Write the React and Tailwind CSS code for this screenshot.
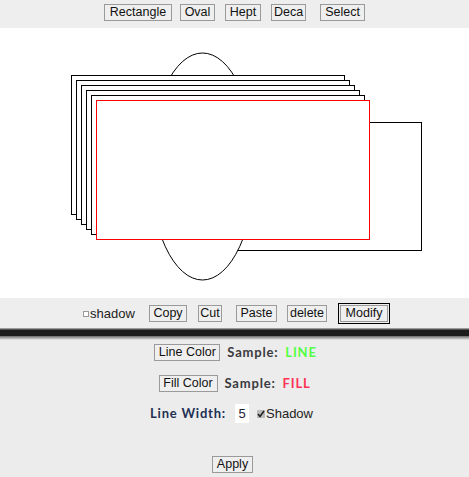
import React from 'react';

const font = { fontFamily: '"Liberation Sans", Arial, sans-serif' };

const Btn = ({ children, className = '' }) => (
    <button
        className={`h-[17px] px-0 border border-[#9a9a9a] bg-[#efefef] text-[12.5px] leading-none text-[#111] shrink-0 ${className}`}
        style={font}
    >
        {children}
    </button>
);

const stack = [0, 1, 2, 3, 4];

const Canvas = () => (
    <svg width="469" height="270" className="block bg-white" shapeRendering="crispEdges">
        <rect x="215.5" y="94.5" width="206" height="128" fill="white" stroke="black" />
        <ellipse cx="202.5" cy="138.5" rx="52.5" ry="113.5" fill="white" stroke="black" shapeRendering="auto" />
        {stack.map((i) => (
            <rect key={i} x={71.5 + i * 5} y={47.5 + i * 5} width="273" height="139" fill="white" stroke="black" />
        ))}
        <rect x="96.5" y="72.5" width="273" height="139" fill="white" stroke="#ff0000" />
    </svg>
);

const Label = ({ children, className = '' }) => (
    <span
        className={`text-[13px] font-bold tracking-[0.8px] ${className}`}
        style={{ fontFamily: 'Lato, "Open Sans", sans-serif' }}
    >
        {children}
    </span>
);

export default function App() {
    return (
        <div className="w-[469px] h-[477px] bg-[#ececec] overflow-hidden">
            <div className="h-[28px] bg-[#eeeeee] flex items-center pl-[104px] pb-[3px]">
                <Btn className="w-[68px]">Rectangle</Btn>
                <Btn className="w-[35px] ml-[8px]">Oval</Btn>
                <Btn className="w-[36px] ml-[10px]">Hept</Btn>
                <Btn className="w-[35px] ml-[10px]">Deca</Btn>
                <Btn className="w-[45px] ml-[14px]">Select</Btn>
            </div>

            <Canvas />

            <div className="h-[30px] bg-[#eeeeee] flex items-center pl-[83px] pt-[1px]">
                <label className="flex items-center text-[13px] text-[#222] w-[66px]" style={font}>
                    <span className="w-[6px] h-[6px] border border-[#9a9a9a] bg-white mr-[1px]" />
                    shadow
                </label>
                <Btn className="w-[38px]">Copy</Btn>
                <Btn className="w-[24px] ml-[11px]">Cut</Btn>
                <Btn className="w-[41px] ml-[14px]">Paste</Btn>
                <Btn className="w-[40px] ml-[10px]">delete</Btn>
                <Btn className="w-[48px] ml-[13px] outline outline-1 outline-black outline-offset-[1px]">Modify</Btn>
            </div>

            <div className="h-[1px] bg-[#9a9a9a]" />
            <div className="h-[1px] bg-[#555]" />
            <div className="h-[6px] bg-[#1c1c1c]" />
            <div className="h-[4px] bg-gradient-to-b from-[#6a6a6a] to-[#ececec]" />

            <div className="flex flex-col items-center pt-[4px]">
                <div className="h-[17px] flex items-center gap-[7px] pl-[2px]">
                    <Btn className="w-[66px]">Line Color</Btn>
                    <Label className="text-[#3a3a40]">Sample:</Label>
                    <Label className="text-[#55ff44]">LINE</Label>
                </div>
                <div className="h-[17px] mt-[14px] flex items-center gap-[7px]">
                    <Btn className="w-[59px]">Fill Color</Btn>
                    <Label className="text-[#3a3a40]">Sample:</Label>
                    <Label className="text-[#ff3355]">FILL</Label>
                </div>
                <div className="h-[19px] mt-[12px] flex items-center -ml-[6px]">
                    <Label className="text-[#233052]">Line Width:</Label>
                    <span
                        className="ml-[9px] w-[14px] h-[19px] bg-white text-[13px] text-[#223] flex items-center justify-center"
                        style={font}
                    >
                        5
                    </span>
                    <span className="ml-[8px] w-[8px] h-[8px] bg-[#bbb] flex items-center justify-center">
                        <svg width="8" height="8" viewBox="0 0 8 8">
                            <path d="M1 4 L3 6.5 L7 1" fill="none" stroke="#222" strokeWidth="1.6" />
                        </svg>
                    </span>
                    <span className="text-[13px] text-[#222] ml-[1px]" style={font}>Shadow</span>
                </div>
                <div className="mt-[27px] -ml-[4px]">
                    <Btn className="w-[41px]">Apply</Btn>
                </div>
            </div>
        </div>
    );
}
